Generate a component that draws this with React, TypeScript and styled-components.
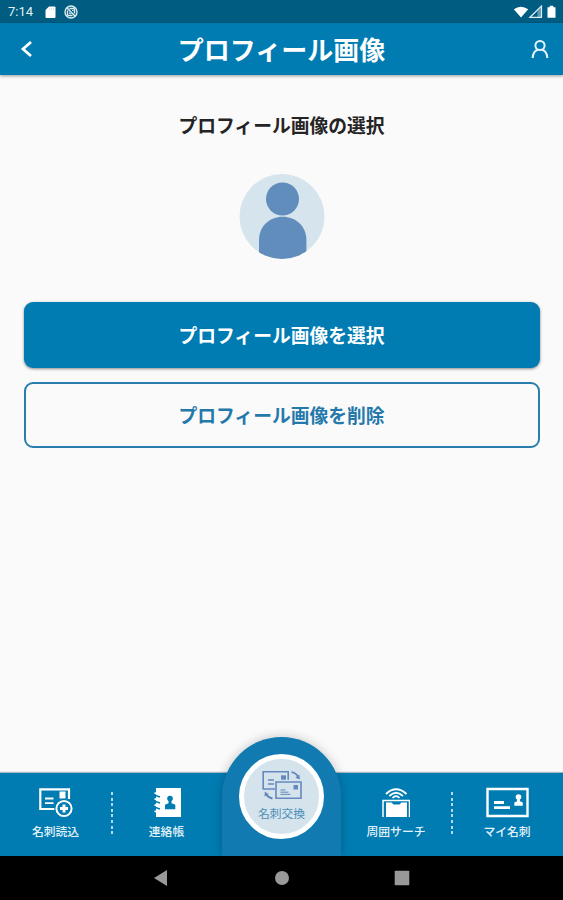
import React from "react";
import styled, { createGlobalStyle, css } from "styled-components";

const blue = "#007cb2";

const GlobalStyle = createGlobalStyle`
  * { box-sizing: border-box; }
  body { margin: 0; }
  button { font: inherit; padding: 0; border: 0; background: none; color: inherit; }
`;

const Screen = styled.div`
  height: 900px;
  width: 100%;
  display: flex;
  flex-direction: column;
  overflow: hidden;
  background: #fafafa;
  font-family: "Noto Sans CJK JP", "Noto Sans", sans-serif;
`;

const StatusBar = styled.div`
  height: 23px;
  flex: none;
  display: flex;
  align-items: center;
  padding: 1px 6px 0 8px;
  background: #005d81;
  color: #e4f0f5;
  font: 400 13px/22px Roboto, sans-serif;
`;

const StatusIcons = styled.div<{ $end?: boolean }>`
  display: flex;
  align-items: center;
  ${({ $end }) => ($end ? css`margin-left: auto;` : css`margin-left: 12px; gap: 8px;`)}
  svg { display: block; }
`;

const Header = styled.header`
  height: 52px;
  flex: none;
  display: grid;
  grid-template-columns: 56px 1fr 56px;
  align-items: center;
  background: ${blue};
  color: #fff;
  box-shadow: 0 1px 3px rgba(0, 0, 0, 0.4);
  z-index: 1;
`;

const Title = styled.h1`
  margin: 0;
  text-align: center;
  font-size: 26px;
  line-height: 38px;
  font-weight: 700;
`;

const HeaderButton = styled.button<{ $align: "left" | "right" }>`
  display: flex;
  justify-content: ${({ $align }) => ($align === "left" ? "flex-start" : "flex-end")};
  padding: ${({ $align }) => ($align === "left" ? "0 0 0 20px" : "0 14px 0 0")};
`;

const Content = styled.main`
  flex: 1;
  display: flex;
  flex-direction: column;
  align-items: center;
  padding: 35px 23.5px 0;
`;

const Heading = styled.h2`
  margin: 0 0 34px;
  font-size: 18.8px;
  line-height: 30px;
  font-weight: 700;
  color: #242424;
`;

const Avatar = styled.svg`
  display: block;
  width: 86px;
  height: 86px;
  flex: none;
  margin-bottom: 42px;
`;

const ActionButton = styled.button<{ $filled?: boolean }>`
  width: 100%;
  height: 66px;
  flex: none;
  border-radius: 9px;
  margin-bottom: 14px;
  font-size: 18.8px;
  line-height: 28px;
  font-weight: 700;
  ${({ $filled }) =>
    $filled
      ? css`
          background: ${blue};
          color: #fff;
          box-shadow: 0 1px 3px rgba(0, 0, 0, 0.45);
        `
      : css`
          border: 2px solid #287fae;
          color: #2479aa;
        `}
`;

const TabBar = styled.nav`
  height: 83px;
  flex: none;
  display: grid;
  grid-template-columns: 1fr 1fr 119px 110px 112px;
  background: ${blue};
  color: #fff;
  box-shadow: 0 -1px 1px rgba(0, 60, 90, 0.35);
`;

const Tab = styled.button<{ $divided?: boolean }>`
  display: flex;
  flex-direction: column;
  align-items: center;
  padding-top: 14px;
  ${({ $divided }) =>
    $divided &&
    css`
      background: repeating-linear-gradient(to bottom, #b4d9e9 0 3px, transparent 3px 5.6px) left 19px / 2px 44px
        no-repeat;
    `}
`;

const TabLabel = styled.span`
  margin-top: 4px;
  font-size: 11.8px;
  line-height: 18px;
  font-weight: 500;
  white-space: nowrap;
  color: #e3f2f8;
`;

const Dome = styled.div`
  height: 119px;
  margin-top: -36px;
  padding-top: 17px;
  display: flex;
  justify-content: center;
  align-items: flex-start;
  border-radius: 59.5px 59.5px 0 0;
  background: #117bb1;
  box-shadow: 0 0 11px rgba(0, 0, 0, 0.22);
`;

const ExchangeButton = styled.button`
  width: 85px;
  height: 85px;
  display: flex;
  flex-direction: column;
  align-items: center;
  padding-top: 11px;
  border: 5px solid #fff;
  border-radius: 50%;
  background: #d4e3ec;
  ${TabLabel} {
    margin-top: 4px;
    color: #4d8fb7;
    font-weight: 400;
  }
`;

const SystemBar = styled.div`
  height: 44px;
  flex: none;
  display: grid;
  grid-template-columns: repeat(3, 120px);
  justify-content: center;
  align-items: center;
  justify-items: center;
  background: #000;
  z-index: 1;
  svg { display: block; }
`;

const ScanIcon = () => (
  <svg width="36" height="31" viewBox="0 0 36 31" fill="none" stroke="#fff">
    <path d="M17 22H2.3V2.3H31V12" strokeWidth="2.2" />
    <path d="M7 11.5h8.5M7 16.2h8.5" strokeWidth="1.8" />
    <path d="M21.5 4.5h6v7h-6z" fill="#fff" stroke="none" />
    <circle cx="26" cy="21.5" r="9.7" fill={blue} stroke="none" />
    <circle cx="26" cy="21.5" r="7.6" strokeWidth="2" />
    <path d="M26 17.5v8M22 21.5h8" strokeWidth="3" />
  </svg>
);

const ContactsIcon = () => (
  <svg width="28" height="31" viewBox="0 0 28 31">
    <path d="M3 1h25v29H3z" fill="#fff" />
    <path d="M2 8.3l5 1.8M2 14.3l5 1.8M2 20.3l5 1.8" stroke={blue} strokeWidth="1.6" />
    <path d="M1.5 5.8l4.5 2M1.5 11.8l4.5 2M1.5 17.8l4.5 2M1.5 24l4.5 2" stroke="#fff" strokeWidth="1.8" />
    <circle cx="17" cy="11.5" r="2.8" fill={blue} />
    <path d="M15.5 12.5h3v3.7l3.8 1.6v4.4H12v-4.4l3.5-1.6z" fill={blue} />
  </svg>
);

const ExchangeIcon = () => (
  <svg width="40" height="30" viewBox="0 0 40 30" fill="none" stroke="#6689bd" strokeWidth="1.6">
    <path d="M13 19H1.2V1.8h25v8" />
    <path d="M6 10h6M6 14h6" strokeWidth="1.4" />
    <path d="M19 5.3h5v4.4h-5z" fill="#6689bd" stroke="none" />
    <path d="M14 12h25v16.3H14z" />
    <path d="M18.5 20h5M18.5 22.2h8M18.5 24.4h10" strokeWidth="1" />
    <path d="M31.5 15h4.5v4.5h-4.5z" fill="#6689bd" stroke="none" />
    <path d="M29.5 2.2c3.4.6 5.6 2.3 6.6 5M10.5 28.5c-3-.7-5-2-6.3-4.3" strokeWidth="1.8" />
    <path d="M33.3 7.8l4.6 1.8-.5-5zM2.5 26.5l.3-5 4 2.7z" fill="#6689bd" stroke="none" />
  </svg>
);

const SearchIcon = () => (
  <svg width="28" height="31" viewBox="0 0 28 31" fill="none" stroke="#fff">
    <path d="M4 7Q14-2.5 24.5 7M7.3 9Q14 2.5 21 9M10.5 11Q14 7.3 17.5 11" strokeWidth="1.8" />
    <path d="M1 30V13.5h26.5V30" strokeWidth="1.5" />
    <path d="M4 15.5h5.5l2 2h6l2-2H25V30H4z" fill="#fff" stroke="none" />
  </svg>
);

const CardIcon = () => (
  <svg width="44" height="31" viewBox="0 0 44 31" fill="none" stroke="#fff">
    <path d="M2.5 2h40v27h-40z" strokeWidth="2.4" />
    <path d="M9 15.5h10M9 20.7h16" strokeWidth="2.8" />
    <circle cx="33.5" cy="10" r="2.8" fill="#fff" stroke="none" />
    <path d="M32 11h3v3.2l2.8 1.3v3.3h-8.5v-3.3l2.7-1.3z" fill="#fff" stroke="none" />
  </svg>
);

const StatusStart = () => (
  <StatusIcons>
    <svg width="11" height="13" viewBox="0 0 11 13">
      <path d="M4 .5h5.5q1 0 1 1V11q0 1-1 1h-8q-1 0-1-1V4z" fill="#fff" />
      <path d="M4.5 2v2M6.5 2v2M8.5 2v2" stroke="#c8dce5" strokeWidth=".7" />
    </svg>
    <svg width="14" height="14" viewBox="0 0 14 14" fill="none" stroke="#dcebf2">
      <circle cx="7" cy="7" r="6" strokeWidth="1.4" />
      <path d="M2.8 2.8l8.4 8.4M5.5 3.5h4q1 0 1 1v4M3.5 5.5v4q0 1 1 1h4" strokeWidth="1.4" />
      <path d="M8 5.5h1.5M5.5 7.5v1.2h1.7" strokeWidth="1" />
    </svg>
  </StatusIcons>
);

const StatusEnd = () => (
  <StatusIcons $end>
    <svg width="44" height="14" viewBox="0 0 44 14" fill="#fff">
      <path d="M.8 4.2q7-5 14.4 0L8 12.5z" />
      <path d="M17 12.3L28.5 1v11.3z" fill="none" stroke="#dcebf2" strokeWidth="1.2" />
      <path d="M24.5 6L28 2.5V12h-3.5z" fill="#dcebf2" opacity=".45" />
      <path d="M34.5 2.2h2.2V.8h3.6v1.4h2.2v10.6h-8z" />
    </svg>
  </StatusIcons>
);

export default function App() {
  return (
    <>
      <GlobalStyle />
      <Screen>
        <StatusBar>
          <span>7:14</span>
          <StatusStart />
          <StatusEnd />
        </StatusBar>
        <Header>
          <HeaderButton $align="left" aria-label="戻る">
            <svg width="14" height="18" viewBox="0 0 14 18" fill="none" stroke="#fff" strokeWidth="2.8">
              <path d="M11 2L3 9l8 7" />
            </svg>
          </HeaderButton>
          <Title>プロフィール画像</Title>
          <HeaderButton $align="right" aria-label="アカウント">
            <svg width="18" height="20" viewBox="0 0 18 20" fill="none" stroke="#e5f5fc" strokeWidth="2">
              <circle cx="9" cy="6.5" r="4.6" />
              <path d="M1.7 19c.2-4.7 2.4-7.3 5-8.2M16.3 19c-.2-4.7-2.4-7.3-5-8.2" />
            </svg>
          </HeaderButton>
        </Header>
        <Content>
          <Heading>プロフィール画像の選択</Heading>
          <Avatar viewBox="0 0 86 86">
            <clipPath id="avatar">
              <circle cx="43" cy="42.5" r="42.5" />
            </clipPath>
            <g clipPath="url(#avatar)">
              <path d="M0 0h86v86H0z" fill="#d5e4ed" />
              <circle cx="43.5" cy="25" r="16.5" fill="#618dbd" />
              <path d="M20 86V66C20 52 30.7 42.7 43.7 42.7S67.4 52 67.4 66v20z" fill="#618dbd" />
            </g>
          </Avatar>
          <ActionButton $filled>プロフィール画像を選択</ActionButton>
          <ActionButton>プロフィール画像を削除</ActionButton>
        </Content>
        <TabBar>
          <Tab>
            <ScanIcon />
            <TabLabel>名刺読込</TabLabel>
          </Tab>
          <Tab $divided>
            <ContactsIcon />
            <TabLabel>連絡帳</TabLabel>
          </Tab>
          <Dome>
            <ExchangeButton>
              <ExchangeIcon />
              <TabLabel>名刺交換</TabLabel>
            </ExchangeButton>
          </Dome>
          <Tab>
            <SearchIcon />
            <TabLabel>周囲サーチ</TabLabel>
          </Tab>
          <Tab $divided>
            <CardIcon />
            <TabLabel>マイ名刺</TabLabel>
          </Tab>
        </TabBar>
        <SystemBar>
          <svg width="16" height="18" viewBox="0 0 16 18">
            <path d="M0 9L13 1v16z" fill="#999" />
          </svg>
          <svg width="16" height="16" viewBox="0 0 16 16">
            <circle cx="8" cy="8" r="7" fill="#999" />
          </svg>
          <svg width="16" height="16" viewBox="0 0 16 16">
            <rect x=".7" y=".7" width="14.6" height="14.6" rx=".8" fill="#999" />
          </svg>
        </SystemBar>
      </Screen>
    </>
  );
}
